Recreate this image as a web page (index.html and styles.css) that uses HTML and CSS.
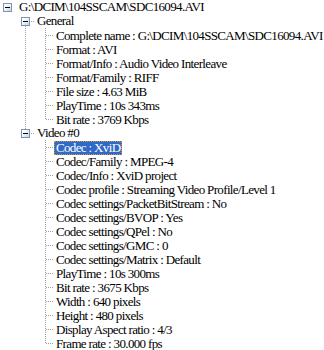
FILE: index.html
```html
<!DOCTYPE html>
<html lang="en">
<head>
  <meta charset="UTF-8" />
  <title>MediaInfo tree</title>
  <link rel="stylesheet" href="styles.css">
</head>
<body>
  <div class="tree">
    <div class="row root-row"><span class="btn"></span><span class="label">G:\DCIM\104SSCAM\SDC16094.AVI</span></div>

    <ul class="level1">
      <!-- General -->
      <li class="first">
        <div class="row"><span class="btn"></span><span class="label">General</span></div>
        <ul class="level2">
          <li><span class="label">Complete name : G:\DCIM\104SSCAM\SDC16094.AVI</span></li>
          <li><span class="label">Format : AVI</span></li>
          <li><span class="label">Format/Info : Audio Video Interleave</span></li>
          <li><span class="label">Format/Family : RIFF</span></li>
          <li><span class="label">File size : 4.63 MiB</span></li>
          <li><span class="label">PlayTime : 10s 343ms</span></li>
          <li class="last"><span class="label">Bit rate : 3769 Kbps</span></li>
        </ul>
      </li>

      <!-- Video #0 -->
      <li class="last">
        <div class="row"><span class="btn"></span><span class="label">Video #0</span></div>
        <ul class="level2">
          <li><span class="label sel">Codec : XviD</span></li>
          <li><span class="label">Codec/Family : MPEG-4</span></li>
          <li><span class="label">Codec/Info : XviD project</span></li>
          <li><span class="label">Codec profile : Streaming Video Profile/Level 1</span></li>
          <li><span class="label">Codec settings/PacketBitStream : No</span></li>
          <li><span class="label">Codec settings/BVOP : Yes</span></li>
          <li><span class="label">Codec settings/QPel : No</span></li>
          <li><span class="label">Codec settings/GMC : 0</span></li>
          <li><span class="label">Codec settings/Matrix : Default</span></li>
          <li><span class="label">PlayTime : 10s 300ms</span></li>
          <li><span class="label">Bit rate : 3675 Kbps</span></li>
          <li><span class="label">Width : 640 pixels</span></li>
          <li><span class="label">Height : 480 pixels</span></li>
          <li><span class="label">Display Aspect ratio : 4/3</span></li>
          <li class="last"><span class="label">Frame rate : 30.000 fps</span></li>
        </ul>
      </li>
    </ul>
  </div>
</body>
</html>
```

FILE: styles.css
```css
* {
  margin: 0;
  padding: 0;
  box-sizing: border-box;
}
body {
  background: #fff;
  color: #000;
  font-family: 'Liberation Serif', 'Times New Roman', serif;
  font-size: 13px;
  letter-spacing: -0.65px;
  width: 324px;
  height: 350px;
  overflow: hidden;
}
ul {
  list-style: none;
}
.row {
  display: flex;
  align-items: center;
  height: 14px;
}
.root-row {
  padding-left: 3px;
}
.btn {
  flex: none;
  width: 9px;
  height: 9px;
  border: 1px solid #7898b5;
  background: linear-gradient(135deg, #fff 25%, #c6d3e2);
  display: flex;
  align-items: center;
  justify-content: center;
}
.btn::before {
  content: "";
  width: 5px;
  height: 1px;
  background: #000;
}
.row .label {
  margin-left: 5px;
}
.label {
  display: inline-block;
  height: 14px;
  line-height: 13px;
  padding: 0 2px;
  white-space: nowrap;
}
.sel {
  background: #316ac5;
  color: #fff;
  outline: 1px dotted #ce953a;
  outline-offset: -1px;
}

/* level 1: General / Video #0 */
.level1 {
  margin-left: 25px;
}
.level1 > li > .row .btn {
  margin-left: -4px;
}
.level1 > li.first {
  background:
    repeating-linear-gradient(to right, #a0a0a0 0 1px, transparent 1px 2px) 0 7px / 10px 1px no-repeat,
    repeating-linear-gradient(#a0a0a0 0 1px, transparent 1px 2px) 0 8px / 1px calc(100% - 8px) no-repeat;
}
.level1 > li.last {
  background:
    repeating-linear-gradient(to right, #a0a0a0 0 1px, transparent 1px 2px) 0 7px / 10px 1px no-repeat,
    repeating-linear-gradient(#a0a0a0 0 1px, transparent 1px 2px) 0 0 / 1px 8px no-repeat;
}

/* level 2: properties */
.level2 {
  padding-left: 20px;
}
.level2 > li {
  height: 14px;
  padding-left: 9px;
  background:
    repeating-linear-gradient(to right, #a0a0a0 0 1px, transparent 1px 2px) 1px 7px / 8px 1px no-repeat,
    repeating-linear-gradient(#a0a0a0 0 1px, transparent 1px 2px) 0 0 / 1px 100% no-repeat;
}
.level2 > li.last {
  background:
    repeating-linear-gradient(to right, #a0a0a0 0 1px, transparent 1px 2px) 1px 7px / 8px 1px no-repeat,
    repeating-linear-gradient(#a0a0a0 0 1px, transparent 1px 2px) 0 0 / 1px 8px no-repeat;
}
```
